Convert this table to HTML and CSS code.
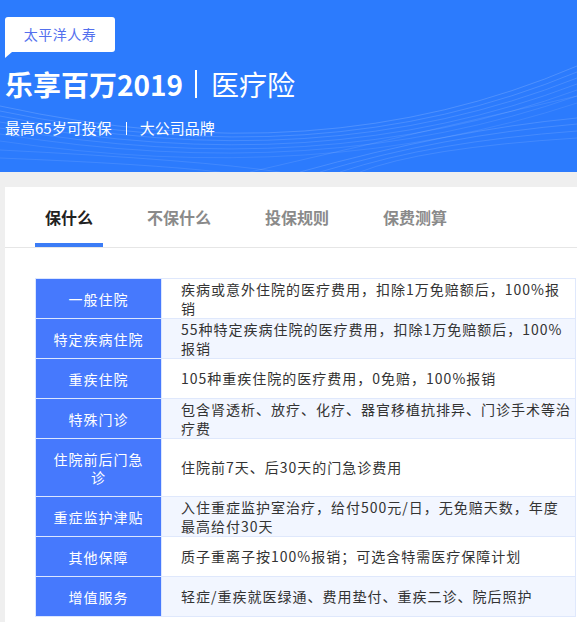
FILE: index.html
```html
<!DOCTYPE html>
<html lang="zh-CN">
<head>
<meta charset="utf-8">
<title>乐享百万2019</title>
<link rel="stylesheet" href="styles.css">
</head>
<body>
<header class="hero">
  <svg class="hero-waves" width="577" height="172" viewBox="0 0 577 172" aria-hidden="true">
    <g fill="none" stroke="#ffffff" stroke-width="1">
      <path d="M0,106 Q320,176 577,66" opacity="0.16"/>
      <path d="M0,111 Q320,178 577,72" opacity="0.14"/>
      <path d="M0,116 Q320,180 577,78" opacity="0.13"/>
      <path d="M0,122 Q320,182 577,84" opacity="0.12"/>
      <path d="M0,128 Q320,184 577,90" opacity="0.11"/>
      <path d="M0,134 Q320,186 577,96" opacity="0.10"/>
      <path d="M0,141 Q320,188 577,103" opacity="0.09"/>
      <path d="M577,118 Q450,130 300,172" opacity="0.14"/>
      <path d="M577,124 Q440,136 320,172" opacity="0.13"/>
      <path d="M577,131 Q430,142 340,172" opacity="0.12"/>
      <path d="M577,138 Q420,148 360,172" opacity="0.11"/>
      <path d="M577,96 Q430,130 250,172" opacity="0.10"/>
      <path d="M0,150 Q200,160 280,172" opacity="0.10"/>
      <path d="M0,158 Q150,164 220,172" opacity="0.10"/>
    </g>
  </svg>
  <div class="badge">太平洋人寿</div>
  <h1 class="title"><span class="title-main">乐享百万2019</span><span class="title-bar"></span><span class="title-sub">医疗险</span></h1>
  <p class="tagline"><span>最高65岁可投保</span><span class="tag-bar"></span><span>大公司品牌</span></p>
</header>

<main class="card">
  <nav class="tabs">
    <span class="tab tab-active">保什么</span>
    <span class="tab">不保什么</span>
    <span class="tab">投保规则</span>
    <span class="tab">保费测算</span>
  </nav>

  <table class="cover">
    <tbody>
      <tr><th>一般住院</th><td>疾病或意外住院的医疗费用，扣除1万免赔额后，100%报销</td></tr>
      <tr class="alt"><th>特定疾病住院</th><td>55种特定疾病住院的医疗费用，扣除1万免赔额后，100%报销</td></tr>
      <tr><th>重疾住院</th><td>105种重疾住院的医疗费用，0免赔，100%报销</td></tr>
      <tr class="alt"><th>特殊门诊</th><td>包含肾透析、放疗、化疗、器官移植抗排异、门诊手术等治疗费</td></tr>
      <tr><th>住院前后门急诊</th><td>住院前7天、后30天的门急诊费用</td></tr>
      <tr class="alt"><th>重症监护津贴</th><td>入住重症监护室治疗，给付500元/日，无免赔天数，年度最高给付30天</td></tr>
      <tr><th>其他保障</th><td>质子重离子按100%报销；可选含特需医疗保障计划</td></tr>
      <tr class="alt"><th>增值服务</th><td>轻症/重疾就医绿通、费用垫付、重疾二诊、院后照护</td></tr>
    </tbody>
  </table>
</main>
</body>
</html>
```

FILE: styles.css
```css
* { box-sizing: border-box; }

html, body {
  margin: 0;
  padding: 0;
}

body {
  background: #efefef;
  font-family: "Noto Sans CJK SC", "Noto Sans", sans-serif;
  color: #333;
  width: 577px;
  overflow: hidden;
}

.hero {
  position: relative;
  height: 172px;
  background: #2c7bfd;
  padding: 17px 0 0 5px;
  color: #fff;
  overflow: hidden;
}

.hero-waves {
  position: absolute;
  left: 0;
  top: 0;
}

.badge {
  position: relative;
  width: 110px;
  height: 35px;
  background: #fff;
  border-radius: 3px 3px 3px 0;
  color: #5470ee;
  font-size: 14px;
  line-height: 35px;
  text-align: center;
  letter-spacing: 0.5px;
}

.badge::after {
  content: "";
  position: absolute;
  left: 0;
  top: 35px;
  border-left: 7px solid #fff;
  border-bottom: 6px solid transparent;
}

.title {
  position: relative;
  margin: 14px 0 0;
  display: flex;
  align-items: center;
  height: 36px;
  font-size: 28px;
  line-height: 36px;
  font-weight: 700;
  letter-spacing: 0;
}

.title-main {
  font-weight: 700;
}

.title-bar {
  width: 2px;
  height: 28px;
  background: #fff;
  margin: 0 14px 0 12px;
}

.title-sub {
  font-weight: 400;
}

.tagline {
  position: relative;
  margin: 16px 0 0;
  display: flex;
  align-items: center;
  font-size: 15px;
  line-height: 20px;
}

.tag-bar {
  width: 1px;
  height: 13px;
  background: #fff;
  margin: 0 13px 0 14px;
}

.card {
  margin: 15px 0 0 5px;
  background: #fff;
  padding-bottom: 10px;
}

.tabs {
  display: flex;
  gap: 34px;
  padding-left: 30px;
  height: 61px;
  border-bottom: 1px solid #e6e6e6;
}

.tab {
  padding: 18px 10px 0;
  height: 60px;
  font-size: 16px;
  line-height: 24px;
  font-weight: 700;
  color: #8a8a8a;
}

.tab-active {
  color: #222;
  border-bottom: 4px solid #3b7cf6;
}

.cover {
  margin: 30px 1px 0 30px;
  width: 541px;
  border-collapse: collapse;
  font-size: 14px;
  letter-spacing: 1px;
}

.cover th,
.cover td {
  border: 1px solid #dfe8fc;
}

.cover th {
  width: 126px;
  background: #4679fd;
  color: #fff;
  font-weight: 400;
  padding: 10.5px 14px;
  line-height: 18px;
  text-align: center;
  border-color: #dbe6ff;
}

.cover td {
  padding: 0 3px 0 19px;
  line-height: 18.5px;
  color: #333;
  vertical-align: middle;
  background: #fff;
}

.cover tr.alt td {
  background: #f2f6ff;
}
```
